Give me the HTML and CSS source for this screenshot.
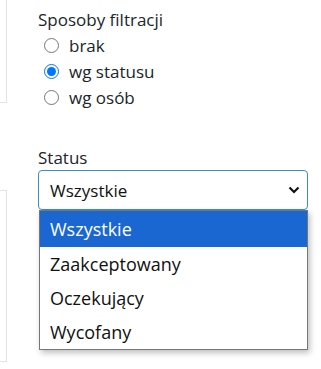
FILE: index.html
```html
<!DOCTYPE html>
<html lang="pl">
<head>
  <meta charset="UTF-8" />
  <title>Filtry</title>
  <meta name="viewport" content="width=device-width, initial-scale=1.0" />
  <link rel="stylesheet" href="styles.css">
</head>
<body>
  <div class="layout">
    <div class="side">
      <div class="side-box side-top"></div>
      <div class="side-box side-bottom"></div>
    </div>

    <div class="filters">
      <div class="group">
        <div class="group-title">Sposoby filtracji</div>
        <label class="radio"><input type="radio" name="mode" /> brak</label>
        <label class="radio"><input type="radio" name="mode" checked /> wg statusu</label>
        <label class="radio"><input type="radio" name="mode" /> wg osób</label>
      </div>

      <div class="field">
        <div class="field-label">Status</div>
        <div class="select-wrap">
          <div class="select">
            <span>Wszystkie</span>
            <svg class="chevron" width="12" height="8" viewBox="0 0 12 8">
              <path d="M1.5 1.5 L6 6 L10.5 1.5" fill="none" stroke="#111" stroke-width="2.2" />
            </svg>
          </div>
          <ul class="options">
            <li class="option active">Wszystkie</li>
            <li class="option">Zaakceptowany</li>
            <li class="option">Oczekujący</li>
            <li class="option">Wycofany</li>
          </ul>
        </div>
      </div>
    </div>
  </div>
</body>
</html>
```

FILE: styles.css
```css
body {
  margin: 0;
  font-family: "Open Sans", Arial, sans-serif;
  font-size: 17px;
  color: #212529;
  background: white;
}
.layout {
  display: flex;
  height: 369px;
}
.side {
  width: 7px;
  flex-shrink: 0;
}
.side-box {
  border: 1px solid #e3e3e3;
  border-left: none;
  box-sizing: border-box;
}
.side-top {
  height: 103px;
  border-top: none;
}
.side-bottom {
  margin-top: 87px;
  height: 172px;
}
.filters {
  padding-left: 31px;
  padding-top: 8px;
  width: 270px;
}
.group-title {
  line-height: 24px;
}
.radio {
  display: flex;
  align-items: center;
  gap: 10px;
  height: 26px;
  padding-left: 6px;
}
.radio input {
  margin: 0;
  width: 15px;
  height: 15px;
}
.field {
  margin-top: 36px;
}
.field-label {
  line-height: 24px;
}
.select-wrap {
  position: relative;
}
.select {
  height: 40px;
  box-sizing: border-box;
  border: 1px solid #3a8fc9;
  border-radius: 4px;
  display: flex;
  align-items: center;
  justify-content: space-between;
  padding: 0 7px 0 11px;
  font-size: 17px;
  color: #111;
}
.chevron {
  display: block;
}
.options {
  position: absolute;
  top: 40px;
  left: 1px;
  right: 0;
  margin: 0;
  padding: 0;
  list-style: none;
  background: white;
  border: 1px solid #767676;
  box-shadow: 2px 3px 6px rgba(0,0,0,0.25);
  font-size: 18px;
  color: #111;
}
.option {
  height: 34px;
  line-height: 34px;
  padding-left: 10px;
}
.option.active {
  background: #1a67d2;
  color: white;
  height: 36px;
  line-height: 36px;
}
```
